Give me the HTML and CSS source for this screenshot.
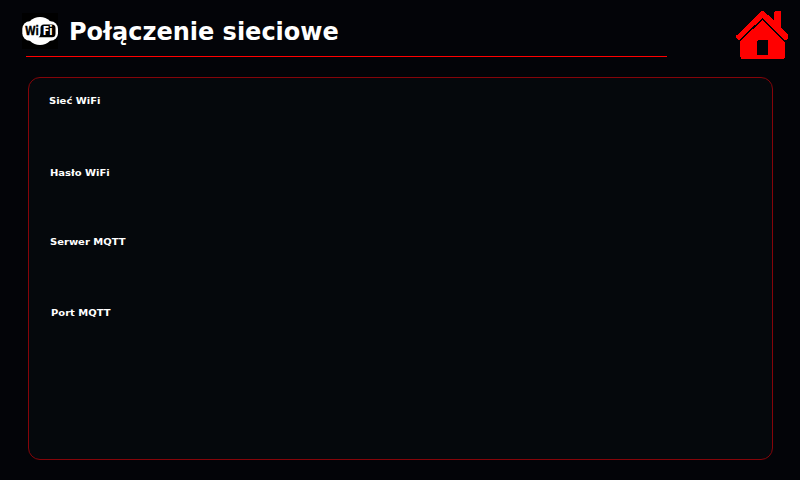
FILE: index.html
```html
<!DOCTYPE html>
<html lang="pl">
<head>
<meta charset="utf-8">
<title>Połączenie sieciowe</title>
<link rel="stylesheet" href="styles.css">
</head>
<body>
<header class="header">
  <div class="heading">
    <svg class="wifi" viewBox="0 0 36 36">
      <rect width="36" height="36" fill="#000"/>
      <rect x="0.3" y="8.2" width="35.7" height="19.6" rx="7.5" fill="#fff"/>
      <ellipse cx="18" cy="18" rx="14" ry="14.1" fill="#fff"/>
      <path d="M22 11.5H30Q33.5 11.5 33.5 15V20.8Q33.5 24.3 30 24.3H16.5Q18.5 23 18.5 20V15Q18.5 11.5 22 11.5Z" fill="#000"/>
      <text class="mark dark" x="2.9" y="22.4" textLength="14" lengthAdjust="spacingAndGlyphs">Wi</text>
      <text class="mark light" x="20.8" y="22.4" textLength="9.8" lengthAdjust="spacingAndGlyphs">Fi</text>
    </svg>
    <h1 class="title">Połączenie sieciowe</h1>
  </div>
  <svg class="home" viewBox="0 0 52 49" shape-rendering="crispEdges">
    <path fill="#f00" d="M25 0.3H28L38 9.5V1L39 0H44L45 1V16.5L52 24V28L49 29L26.5 7L3 29L0 27V25Z"/>
    <path fill="#f00" fill-rule="evenodd" d="M26.5 9L49 31V46L47 48.3H6L4.3 46V30ZM22 29L21 30V44H32V30L31 29Z"/>
  </svg>
</header>
<main class="panel">
  <div class="field ssid">Sieć WiFi</div>
  <div class="field password">Hasło WiFi</div>
  <div class="field server">Serwer MQTT</div>
  <div class="field port">Port MQTT</div>
</main>
</body>
</html>
```
FILE: styles.css
```css
* { box-sizing: border-box; }
body {
  margin: 0;
  width: 800px;
  height: 480px;
  overflow: hidden;
  background: #030408;
  color: #fff;
  font-family: "DejaVu Sans", sans-serif;
  font-weight: bold;
}
.header {
  display: flex;
  justify-content: space-between;
  height: 77px;
  padding: 11px 12px 0 22px;
}
.heading {
  display: flex;
  align-items: flex-start;
  width: 645px;
  height: 46px;
  padding-top: 2px;
  background: linear-gradient(#f00, #f00) 4px 100% / 641px 1px no-repeat;
}
.wifi { width: 36px; height: 36px; }
.mark { font: bold 11.5px "DejaVu Sans", sans-serif; }
.dark {
  fill: #000;
  stroke: #000;
  stroke-width: 0.3px;
}
.light { fill: #fff; }
.title {
  margin: 0 0 0 11px;
  font-size: 24px;
  line-height: 38px;
  white-space: nowrap;
}
.home { width: 52px; height: 49px; }
.panel {
  width: 745px;
  height: 383px;
  margin-left: 28px;
  padding: 16px 20px;
  border: 1px solid #850409;
  border-radius: 12px;
  background: #05080c;
}
.field {
  width: max-content;
  font-size: 9.49px;
  line-height: 14px;
  transform: scaleX(1.053);
  transform-origin: 0 50%;
}
.ssid { margin-bottom: 58px; }
.password { margin: 0 0 55px 1px; }
.server { margin: 0 0 57px 1px; }
.port { margin-left: 2px; }
```
